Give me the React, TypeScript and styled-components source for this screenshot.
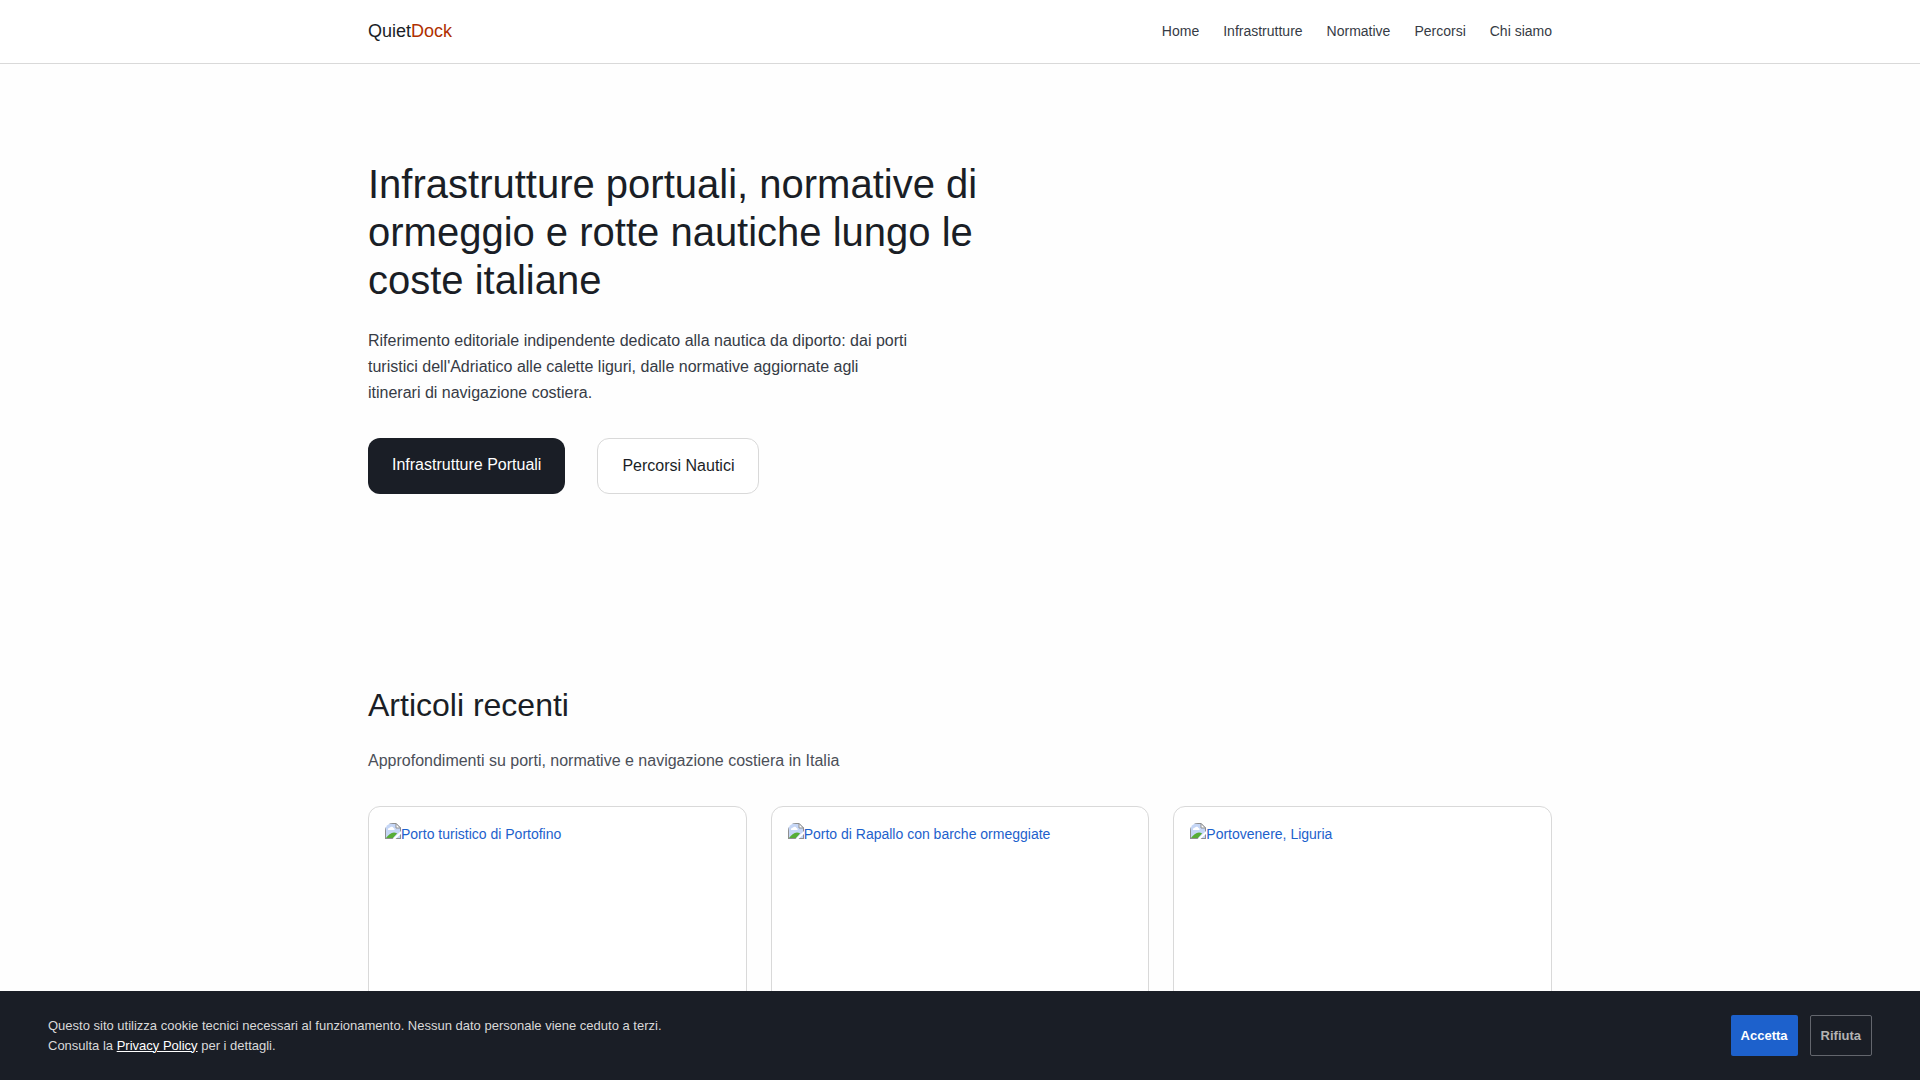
import React from "react";
import styled, { createGlobalStyle } from "styled-components";

const ink = "#1a1e26";
const line = "#d9d9d9";
const blue = "#1d61cc";

const GlobalStyle = createGlobalStyle`
  * { box-sizing: border-box; }
  body {
    margin: 0;
    background: #fefefe;
    color: ${ink};
    font-family: "Liberation Sans", Arial, sans-serif;
    font-size: 16px;
    line-height: 26px;
    overflow-x: hidden;
  }
  h1, h2, p { margin: 0; font-weight: 400; }
  a { text-decoration: none; color: inherit; }
`;

const Container = styled.div`
  max-width: 1280px;
  margin: 0 auto;
  padding: 0 48px;
`;

const Header = styled.header`
  background: #fff;
  border-bottom: 1px solid ${line};
`;

const HeaderRow = styled(Container)`
  display: flex;
  align-items: center;
  justify-content: space-between;
  min-height: 63px;
  line-height: 25px;
`;

const Logo = styled.a`
  font-size: 18px;
  span { color: #b03000; }
`;

const Nav = styled.nav`
  display: flex;
  gap: 24px;
  font-size: 14px;
  color: #363b45;
`;

const Hero = styled.section`
  padding: 96px 0;
`;

const HeroTitle = styled.h1`
  max-width: 640px;
  font-size: 40px;
  line-height: 48px;
  margin-bottom: 24px;
`;

const HeroText = styled.p`
  max-width: 544px;
  color: #363b45;
  margin-bottom: 32px;
`;

const Actions = styled.div`
  display: flex;
  flex-wrap: wrap;
  gap: 32px;
`;

const ActionLink = styled.a<{ $primary?: boolean }>`
  padding: 14px 24px;
  border: ${(p) => (p.$primary ? "none" : `1px solid ${line}`)};
  border-radius: 12px;
  background: ${(p) => (p.$primary ? ink : "#fff")};
  color: ${(p) => (p.$primary ? "#fff" : ink)};
`;

const Recent = styled.section`
  padding: 96px 0;
`;

const SectionTitle = styled.h2`
  font-size: 32px;
  line-height: 38px;
  margin-bottom: 24px;
`;

const SectionText = styled.p`
  color: #4b4f58;
  margin-bottom: 32px;
`;

const Cards = styled.div`
  display: grid;
  grid-template-columns: repeat(3, 1fr);
  gap: 24px;
`;

const Card = styled.article`
  padding: 16px;
  border: 1px solid ${line};
  border-radius: 12px;
  background: #fff;
`;

const CardLink = styled.a`
  display: flex;
  align-items: flex-start;
  aspect-ratio: 16 / 10;
  overflow: hidden;
  border-radius: 8px;
  color: ${blue};
  font-size: 14px;
  line-height: 22px;
`;

const CookieBar = styled.aside`
  position: fixed;
  left: 0;
  right: 0;
  bottom: 0;
  display: flex;
  align-items: center;
  justify-content: space-between;
  gap: 24px;
  padding: 24px 48px;
  background: ${ink};
  font-size: 13px;
`;

const CookieText = styled.p`
  max-width: 640px;
  line-height: 20px;
  color: #d9d9d9;
  a { color: #fff; text-decoration: underline; }
`;

const CookieActions = styled.div`
  display: flex;
  gap: 12px;
`;

const CookieButton = styled.button<{ $primary?: boolean }>`
  padding: ${(p) => (p.$primary ? "10px" : "9px 10px")};
  border: ${(p) => (p.$primary ? "none" : "1px solid #63666d")};
  border-radius: 2px;
  background: ${(p) => (p.$primary ? blue : "transparent")};
  color: ${(p) => (p.$primary ? "#fff" : "#b3b3b3")};
  font: bold 13px/21px "Liberation Sans", Arial, sans-serif;
  cursor: pointer;
`;

const PictureSvg = styled.svg`
  flex: none;
  display: block;
`;

const PictureIcon = () => (
  <PictureSvg width="16" height="16" viewBox="0 0 16 16" aria-hidden="true">
    <path d="M0 0H11L16 5V16H0Z" fill="#c5d6f6" />
    <path d="M3 6.5C3 5.3 4 4.6 5 4.8C5.5 3.4 8 3.4 8.4 5C9.5 5 9.8 6 9.5 7H3Z" fill="#fff" />
    <path d="M1 15C3 12 6 9.5 9 9.5C11 9.5 12 10.5 12 10.5L8 15Z" fill="#57ad36" />
    <path d="M0.5 16V0.5H11L15.5 5V16M0 15.5H16" fill="none" stroke="#8f8f8f" />
    <path d="M11 0.5V5H15.5Z" fill="#fff" stroke="#8f8f8f" />
    <path d="M7.5 16L16 8V11L10.5 16Z" fill="#fff" />
  </PictureSvg>
);

const navItems = ["Home", "Infrastrutture", "Normative", "Percorsi", "Chi siamo"];
const articles = [
  "Porto turistico di Portofino",
  "Porto di Rapallo con barche ormeggiate",
  "Portovenere, Liguria",
];

export default function App() {
  return (
    <>
      <GlobalStyle />
      <Header>
        <HeaderRow>
          <Logo href="#">Quiet<span>Dock</span></Logo>
          <Nav>
            {navItems.map((item) => <a key={item} href="#">{item}</a>)}
          </Nav>
        </HeaderRow>
      </Header>
      <main>
        <Hero>
          <Container>
            <HeroTitle>
              Infrastrutture portuali, normative di ormeggio e rotte nautiche lungo le coste italiane
            </HeroTitle>
            <HeroText>
              Riferimento editoriale indipendente dedicato alla nautica da diporto: dai porti turistici
              dell'Adriatico alle calette liguri, dalle normative aggiornate agli itinerari di
              navigazione costiera.
            </HeroText>
            <Actions>
              <ActionLink href="#" $primary>Infrastrutture Portuali</ActionLink>
              <ActionLink href="#">Percorsi Nautici</ActionLink>
            </Actions>
          </Container>
        </Hero>
        <Recent>
          <Container>
            <SectionTitle>Articoli recenti</SectionTitle>
            <SectionText>Approfondimenti su porti, normative e navigazione costiera in Italia</SectionText>
            <Cards>
              {articles.map((title) => (
                <Card key={title}>
                  <CardLink href="#"><PictureIcon />{title}</CardLink>
                </Card>
              ))}
            </Cards>
          </Container>
        </Recent>
      </main>
      <CookieBar aria-label="Cookie">
        <CookieText>
          Questo sito utilizza cookie tecnici necessari al funzionamento. Nessun dato personale viene
          ceduto a terzi. Consulta la <a href="#">Privacy Policy</a> per i dettagli.
        </CookieText>
        <CookieActions>
          <CookieButton type="button" $primary>Accetta</CookieButton>
          <CookieButton type="button">Rifiuta</CookieButton>
        </CookieActions>
      </CookieBar>
    </>
  );
}
